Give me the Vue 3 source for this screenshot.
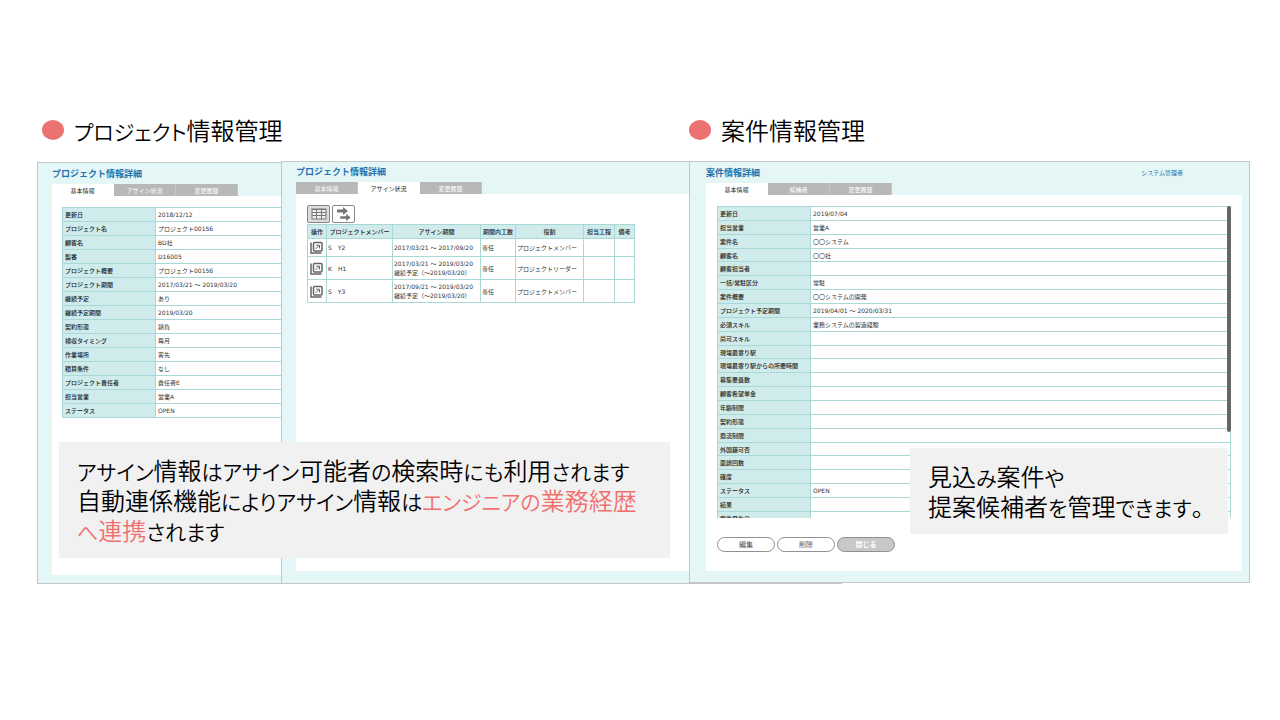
<script setup>
import { h } from 'vue'

const projectRows = [
  ['更新日', '2018/12/12'],
  ['プロジェクト名', 'プロジェクト00156'],
  ['顧客名', 'BD社'],
  ['製番', 'D16005'],
  ['プロジェクト概要', 'プロジェクト00156'],
  ['プロジェクト期間', '2017/03/21 ～ 2019/03/20'],
  ['継続予定', 'あり'],
  ['継続予定期間', '2019/03/20'],
  ['契約形態', '請負'],
  ['検収タイミング', '毎月'],
  ['作業場所', '客先'],
  ['積算条件', 'なし'],
  ['プロジェクト責任者', '責任者E'],
  ['担当営業', '営業A'],
  ['ステータス', 'OPEN'],
]

const memberHeads = ['操作', 'プロジェクトメンバー', 'アサイン期間', '期間内工数', '役割', '担当工程', '備考']
const members = [
  { name: 'S　Y2', period: ['2017/03/21 ～ 2017/09/20'], role: 'プロジェクトメンバー' },
  { name: 'K　H1', period: ['2017/03/21 ～ 2019/03/20', '継続予定（～2019/03/20）'], role: 'プロジェクトリーダー' },
  { name: 'S　Y3', period: ['2017/09/21 ～ 2019/03/20', '継続予定（～2019/03/20）'], role: 'プロジェクトメンバー' },
]

const dealRows = [
  ['更新日', '2019/07/04'],
  ['担当営業', '営業A'],
  ['案件名', '〇〇システム'],
  ['顧客名', '〇〇社'],
  ['顧客担当者', ''],
  ['一括/常駐区分', '常駐'],
  ['案件概要', '〇〇システムの開発'],
  ['プロジェクト予定期間', '2019/04/01 ～ 2020/03/31'],
  ['必須スキル', '業務システムの製造経験'],
  ['尚可スキル', ''],
  ['現場最寄り駅', ''],
  ['現場最寄り駅からの所要時間', ''],
  ['募集要員数', ''],
  ['顧客希望単金', ''],
  ['年齢制限', ''],
  ['契約形態', ''],
  ['商流制限', ''],
  ['外国籍可否', ''],
  ['面談回数', ''],
  ['確度', ''],
  ['ステータス', 'OPEN'],
  ['結果', ''],
  ['案件発生日', ''],
]

// Sets kana a little smaller than the kanji around it.
const Mixed = (props) =>
  props.text
    .split(/([\u3040-\u30ff]+)/)
    .filter(Boolean)
    .map((run) => (/[\u3040-\u30ff]/.test(run) ? h('span', { class: 'kana' }, run) : run))
Mixed.props = ['text']
</script>

<template>
  <main class="page">
    <h1 class="heading wide"><span class="dot"></span><span><Mixed text="プロジェクト情報管理" /></span></h1>
    <h1 class="heading"><span class="dot"></span><span><Mixed text="案件情報管理" /></span></h1>

    <section class="panel basic">
      <h2 class="title">プロジェクト情報詳細</h2>
      <nav class="tabs">
        <button class="tab on">基本情報</button>
        <button class="tab">アサイン状況</button>
        <button class="tab">変更履歴</button>
      </nav>
      <div class="body">
        <table class="info">
          <tbody>
            <tr v-for="r in projectRows" :key="r[0]">
              <th scope="row">{{ r[0] }}</th>
              <td>{{ r[1] }}</td>
            </tr>
          </tbody>
        </table>
      </div>
    </section>

    <section class="panel assign">
      <h2 class="title">プロジェクト情報詳細</h2>
      <nav class="tabs">
        <button class="tab">基本情報</button>
        <button class="tab on">アサイン状況</button>
        <button class="tab">変更履歴</button>
      </nav>
      <div class="body">
        <div class="tools">
          <button class="tool pressed" aria-label="一覧">
            <svg width="16" height="12" viewBox="0 0 16 12">
              <rect x="1" y="1" width="14" height="10" fill="#eee" stroke="#777" />
              <path d="M1 1.500H15M1 4.500H15M1 7.500H15M5.500 1V11M10.500 1V11" stroke="#777" fill="none" />
            </svg>
          </button>
          <button class="tool" aria-label="切替">
            <svg width="16" height="16" viewBox="0 0 16 16" fill="#777">
              <path d="M1 3.500H7V1L12 5L7 9V6.500H1Z" />
              <path d="M4 10H10V7.500L15 11.500L10 15.500V13H4Z" stroke="#fff" stroke-width=".5" />
            </svg>
          </button>
        </div>
        <table class="members">
          <colgroup>
            <col class="c-op" /><col class="c-name" /><col class="c-period" /><col class="c-load" />
            <col class="c-role" /><col class="c-step" /><col class="c-note" />
          </colgroup>
          <thead>
            <tr><th v-for="m in memberHeads" :key="m" scope="col">{{ m }}</th></tr>
          </thead>
          <tbody>
            <tr v-for="m in members" :key="m.name" :class="{ tall: m.period.length > 1 }">
              <td class="op">
                <button class="open" aria-label="開く">
                  <svg width="13" height="13" viewBox="0 0 13 13" fill="none" stroke="#666">
                    <path d="M1 1.500V12H11.500" stroke-width="1.500" />
                    <rect x="3.500" y="1.500" width="8.500" height="8.500" rx="1" stroke-width="1.500" />
                    <path d="M5.500 8L9 4.500M6 4.200H9.500V7.500" />
                  </svg>
                </button>
              </td>
              <td>{{ m.name }}</td>
              <td><div v-for="p in m.period" :key="p" class="line">{{ p }}</div></td>
              <td>専任</td>
              <td>{{ m.role }}</td>
              <td></td>
              <td></td>
            </tr>
          </tbody>
        </table>
      </div>
    </section>

    <section class="panel deal">
      <header class="top">
        <h2 class="title">案件情報詳細</h2>
        <a class="user" href="#">システム管理者</a>
      </header>
      <nav class="tabs">
        <button class="tab on">基本情報</button>
        <button class="tab">候補者</button>
        <button class="tab">変更履歴</button>
      </nav>
      <div class="body">
        <div class="scroll">
          <table class="info">
            <tbody>
              <tr v-for="r in dealRows" :key="r[0]">
                <th scope="row">{{ r[0] }}</th>
                <td>{{ r[1] }}</td>
              </tr>
            </tbody>
          </table>
          <div class="thumb"></div>
        </div>
        <div class="actions">
          <button class="pill">編集</button>
          <button class="pill">削除</button>
          <button class="pill close">閉じる</button>
        </div>
      </div>
    </section>

    <p class="note first">
      <Mixed text="アサイン情報はアサイン可能者の検索時にも利用されます" /><br />
      <Mixed text="自動連係機能によりアサイン情報は" /><em><Mixed text="エンジニアの業務経歴" /><br /><Mixed text="へ連携" /></em><Mixed text="されます" />
    </p>
    <p class="note second">
      <Mixed text="見込み案件や" /><br />
      <Mixed text="提案候補者を管理できます。" />
    </p>
  </main>
</template>

<style>
body {
  margin: 0;
  background: #fff;
}
</style>

<style scoped>
* {
  box-sizing: border-box;
}
.page {
  position: relative;
  display: grid;
  grid-template-columns: 244fr 408fr 561fr;
  grid-template-rows: 49px 423px;
  padding: 112px 30px 0 37px;
  overflow: hidden;
  font-family: "DejaVu Sans", "Noto Sans CJK JP", sans-serif;
  font-size: 6px;
  line-height: 9px;
  color: #333;
}
button {
  padding: 0;
  border: 0;
  font: inherit;
  color: inherit;
}
.heading {
  display: flex;
  align-items: center;
  gap: 10px;
  height: 36px;
  margin: 0;
  font-family: "Noto Sans CJK JP", sans-serif;
  font-size: 24px;
  line-height: 36px;
  font-weight: 350;
  font-feature-settings: "palt";
  color: #000;
}
.heading.wide {
  grid-column: 1 / 3;
  padding-left: 5px;
}
:deep(.kana) {
  font-size: 21px;
  line-height: 24px;
}
.dot {
  width: 22px;
  height: 20px;
  border-radius: 50%;
  background: #ec7272;
}
.panel {
  display: flex;
  flex-direction: column;
  min-width: 0;
  padding: 5px 0 12px 14px;
  border: 1px solid #c3c6c6;
  background: #e5f6f6;
}
.basic {
  margin-top: 1px;
  padding-bottom: 8px;
  border-right: 0;
}
.assign {
  margin-right: -153px;
  padding-top: 4px;
}
.deal {
  position: relative;
  margin-bottom: 1px;
  padding-left: 16px;
  padding-right: 7px;
  padding-bottom: 11px;
}
.top {
  display: flex;
  justify-content: space-between;
  padding-right: 59px;
}
.title {
  margin: 0 0 4px;
  font-size: 9px;
  line-height: 12px;
  font-weight: 700;
  color: #2272b0;
}
.user {
  line-height: 12px;
  color: #2272b0;
  text-decoration: none;
}
.tabs {
  display: flex;
  height: 12px;
}
.tab {
  width: 62px;
  background: #b8b8b8;
  color: #fff;
  border-right: 1px solid #c4c4c4;
}
.tab.on {
  background: #fff;
  border-color: #fff;
  color: #222;
}
.body {
  flex: 1;
  padding: 11px 0 0 11px;
  background: #fff;
}
table {
  border-collapse: collapse;
}
th,
td {
  padding: 0 2px;
  border: 1px solid #a9d9d7;
  text-align: left;
  white-space: nowrap;
  line-height: 9px;
}
th {
  background: #cfebeb;
  color: #222;
  font-weight: 500;
}
.info {
  width: 100%;
  height: 211px;
}
.info th {
  width: 93px;
}
.basic .body {
  padding-left: 10px;
}
.basic .info td {
  border-right: 0;
}
.scroll {
  position: relative;
  height: 312px;
  margin-right: 11px;
  overflow: hidden;
}
.scroll .info {
  height: 320px;
}
.thumb {
  position: absolute;
  top: 0;
  right: 0;
  width: 4px;
  height: 226px;
  border-radius: 2px;
  background: #666;
}
.tools {
  display: flex;
  gap: 2px;
  height: 19px;
}
.tool {
  display: flex;
  align-items: center;
  justify-content: center;
  width: 23px;
  height: 18px;
  border: 1px solid #888;
  border-radius: 2px;
  background: #fff;
}
.tool.pressed {
  background: #dcdcdc;
}
.members {
  table-layout: fixed;
  width: 327px;
}
.members th {
  height: 14px;
  padding: 0;
  text-align: center;
}
.members td {
  height: 18px;
  padding: 0 1px;
}
.members .tall td {
  height: 23px;
}
.c-op { width: 19px; }
.c-name { width: 66px; }
.c-period { width: 88px; }
.c-load { width: 35px; }
.c-role { width: 68px; }
.c-step { width: 31px; }
.c-note { width: 20px; }
.members .op {
  padding: 0 2px;
}
.open {
  display: block;
  width: 13px;
  height: 13px;
  background: none;
}
.open svg {
  display: block;
}
.actions {
  display: flex;
  gap: 2px;
  margin-top: 19px;
}
.pill {
  width: 58px;
  height: 15px;
  border: 1px solid #909090;
  border-radius: 8px;
  background: #fff;
  font-size: 7px;
  line-height: 12px;
  color: #555;
}
.pill.close {
  background: #c8c8c8;
  color: #fff;
  font-weight: 700;
}
.note {
  position: absolute;
  margin: 0;
  padding: 13px 18px;
  background: #f1f1f1;
  font-family: "Noto Sans CJK JP", sans-serif;
  font-size: 24px;
  line-height: 30px;
  font-weight: 350;
  font-feature-settings: "palt";
  color: #000;
  white-space: nowrap;
}
.note em {
  font-style: normal;
  color: #f07070;
}
.first {
  top: 442px;
  left: 59px;
  width: 611px;
}
.second {
  top: 448px;
  right: 52px;
  width: 318px;
}
</style>
